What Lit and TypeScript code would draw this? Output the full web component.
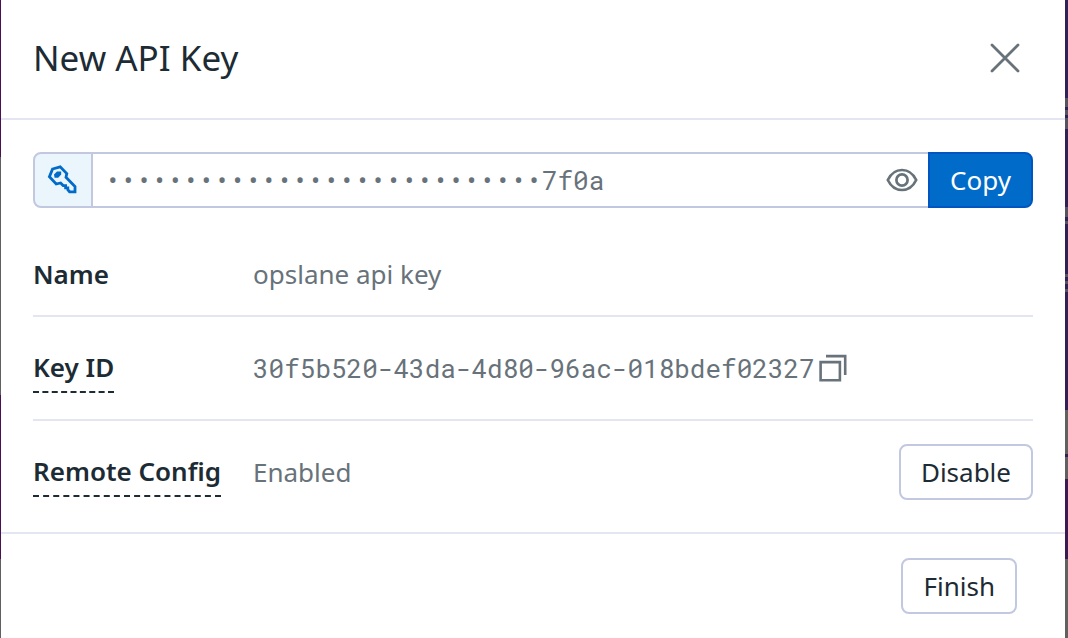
import { LitElement, html, css, svg } from "lit";
import { customElement, state } from "lit/decorators.js";

const SECRET_TAIL = "7f0a";
const HIDDEN_LENGTH = 28;

const closeIcon = svg`<svg width="32" height="32" viewBox="0 0 32 32" fill="none" stroke="currentColor" stroke-width="2.8" stroke-linecap="round" aria-hidden="true"><path d="M3 3L29 29M29 3L3 29"/></svg>`;
const keyIcon = svg`<svg width="32" height="32" viewBox="0 0 32 32" fill="none" stroke="currentColor" stroke-width="2.8" stroke-linejoin="miter" aria-hidden="true"><path d="M5.6 5L13.2 2.8L19.8 9.6L19 13.2L28 22.6V27.8H22.6L20.8 25.8V23.8H18.6V21.6H16.2L13.6 19L9.2 20L2.4 12.8Z"/><path d="M7 10.6L10 7.4H14.2V10.4L11.2 13.8H7.6Z" fill="currentColor" stroke="none"/></svg>`;
const eyeIcon = svg`<svg width="32" height="32" viewBox="0 0 32 32" fill="none" stroke="currentColor" stroke-width="2.7" aria-hidden="true"><path d="M1.8 16C5 9.4 10.2 6 16 6S27 9.4 30.2 16C27 22.6 21.8 26 16 26S5 22.6 1.8 16Z"/><circle cx="16" cy="16" r="5.6"/></svg>`;
const copyIcon = svg`<svg width="28" height="28" viewBox="0 0 28 28" fill="none" stroke="currentColor" stroke-width="2.6" aria-hidden="true"><path d="M1.6 8.1H20.9V26.2H1.6Z"/><path d="M7 2.1H26.2V21"/></svg>`;

@customElement("app-root")
export class ApiKeyDialog extends LitElement {
  @state() private remoteConfig = true;

  static styles = css`
    :host {
      display: block;
      box-sizing: border-box;
      min-height: 100vh;
      padding: 0 3px 0 1px;
      background:
        linear-gradient(#4a1050 157px, #606060 157px 395px, #4a1050 395px 559px, #606060 559px) left / 1px 100% no-repeat,
        linear-gradient(transparent 98px, #55535f 98px 107px, transparent 107px 110px, #55535f 110px 115px, transparent 115px 118px, #55535f 118px 129px, transparent 129px 207px, #55535f 207px 217px, transparent 217px 221px, #55535f 221px 224px, transparent 224px 274px, #55535f 274px 277px, transparent 277px 281px, #55535f 281px 284px, transparent 284px 289px, #55535f 289px 292px, transparent 292px) right / 3px 100% no-repeat,
        linear-gradient(#2e2258, #331f55 410px, #606060 410px 454px, #3b1d55 454px 457px, #606060 457px 479px, #3b1a52 479px 559px, #606060 559px) right / 3px 100% no-repeat;
      font: 26px/36px "Noto Sans", sans-serif;
      color: #1c2b34;
    }
    * { box-sizing: border-box; }
    .dialog { min-height: 100vh; background: #fff; }
    .header {
      display: flex;
      align-items: center;
      justify-content: space-between;
      height: 120px;
      padding: 0 44px 2px 32px;
      border-bottom: 2px solid #e3e6f1;
    }
    .title { margin: 0; font-size: 35px; line-height: 48px; font-weight: 400; }
    button, input { font: inherit; color: inherit; margin: 0; }
    svg { display: block; }
    .icon-button { display: flex; padding: 0; border: 0; background: none; color: #68727a; cursor: pointer; }
    .body { padding: 32px 32px 0; }
    .secret { display: flex; height: 56px; margin-bottom: 24px; }
    .badge {
      display: flex;
      align-items: center;
      justify-content: center;
      width: 60px;
      border: 2px solid #c1c8e0;
      border-radius: 8px 0 0 8px;
      background: #eaf5fc;
      color: #006bc8;
    }
    .field {
      display: flex;
      flex: 1;
      min-width: 0;
      align-items: center;
      padding-right: 10px;
      border: solid #c1c8e0;
      border-width: 2px 0;
    }
    .field-input {
      flex: 1;
      min-width: 0;
      padding: 0 0 0 12px;
      border: 0;
      outline: 0;
      background: none;
      color: #68727a;
    }
    .mono { font-family: "Roboto Mono", "Liberation Mono", monospace; }
    .button {
      height: 56px;
      padding: 0 20px;
      border: 2px solid #c1c8e0;
      border-radius: 8px;
      background: #fff;
      color: #1c2b34;
      cursor: pointer;
    }
    .button-primary {
      border-color: #0056c0;
      border-radius: 0 8px 8px 0;
      background: #006bc8;
      color: #fff;
    }
    .details { margin: 0; }
    .row {
      display: grid;
      grid-template-columns: 220px 1fr auto;
      align-items: center;
      min-height: 104px;
      border-bottom: 2px solid #e3e6f1;
    }
    .row-first { min-height: 85px; }
    .row-last { min-height: 102px; border-bottom: 0; }
    .label { justify-self: start; font-weight: 600; white-space: nowrap; }
    .label-hint { margin-top: 6px; padding-bottom: 6px; border-bottom: 2px dashed #1c2b34; }
    .value { display: flex; align-items: center; gap: 4px; margin: 0; color: #68727a; }
    .footer {
      display: flex;
      justify-content: flex-end;
      margin-top: 9px;
      padding: 24px 48px;
      border-top: 2px solid #e3e6f1;
    }
  `;

  render() {
    return html`
      <section class="dialog" role="dialog" aria-labelledby="title">
        <header class="header">
          <h1 class="title" id="title">New API Key</h1>
          <button class="icon-button" aria-label="Close">${closeIcon}</button>
        </header>
        <div class="body">
          <div class="secret">
            <label class="badge" for="secret" aria-label="API key">${keyIcon}</label>
            <div class="field">
              <input class="field-input mono" id="secret" readonly .value=${"•".repeat(HIDDEN_LENGTH) + SECRET_TAIL} />
              <button class="icon-button" aria-label="Show key">${eyeIcon}</button>
            </div>
            <button class="button button-primary">Copy</button>
          </div>
          <dl class="details">
            <div class="row row-first">
              <dt class="label">Name</dt>
              <dd class="value">opslane api key</dd>
            </div>
            <div class="row">
              <dt class="label label-hint">Key ID</dt>
              <dd class="value">
                <span class="mono">30f5b520-43da-4d80-96ac-018bdef02327</span>
                <button class="icon-button" aria-label="Copy key ID">${copyIcon}</button>
              </dd>
            </div>
            <div class="row row-last">
              <dt class="label label-hint">Remote Config</dt>
              <dd class="value">${this.remoteConfig ? "Enabled" : "Disabled"}</dd>
              <dd class="value">
                <button class="button" @click=${() => (this.remoteConfig = !this.remoteConfig)}>
                  ${this.remoteConfig ? "Disable" : "Enable"}
                </button>
              </dd>
            </div>
          </dl>
        </div>
        <footer class="footer"><button class="button">Finish</button></footer>
      </section>
    `;
  }
}
